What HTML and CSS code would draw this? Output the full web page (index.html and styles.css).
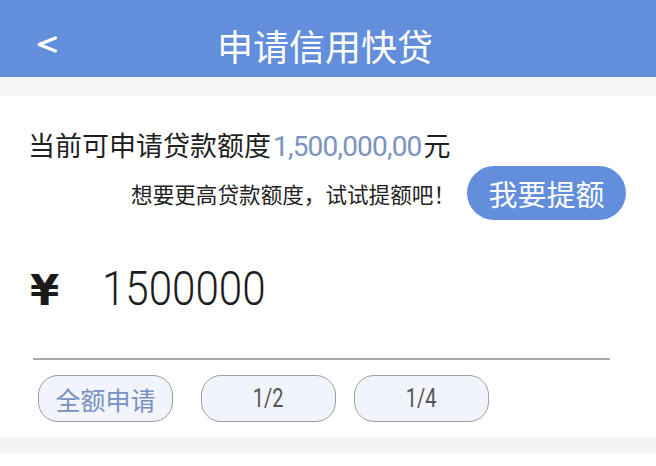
FILE: index.html
```html
<!DOCTYPE html>
<html lang="zh-CN">
<head>
<meta charset="utf-8">
<title>申请信用快贷</title>
<link rel="stylesheet" href="styles.css">
</head>
<body>
  <header class="topbar">
    <div class="topbar-left">
      <svg class="back-icon" width="24" height="20" viewBox="0 0 24 20" aria-hidden="true">
        <polyline points="19.5,3 3,9.5 19.5,16" fill="none" stroke="#ffffff" stroke-width="3.2" stroke-linecap="round" stroke-linejoin="round"/>
      </svg>
    </div>
    <h1 class="topbar-title">申请信用快贷</h1>
    <div class="topbar-right"></div>
  </header>

  <div class="spacer"></div>

  <main class="card">
    <p class="quota">当前可申请贷款额度<span class="quota-num">1,500,000,00</span>元</p>

    <div class="raise-row">
      <span class="raise-tip">想要更高贷款额度，试试提额吧！</span>
      <button class="raise-btn" type="button">我要提额</button>
    </div>

    <div class="amount-row">
      <span class="currency">¥</span>
      <span class="amount"><span class="amount-digits">1500000</span></span>
    </div>

    <div class="divider"></div>

    <div class="chips">
      <button class="chip chip-active" type="button">全额申请</button>
      <button class="chip chip-half" type="button"><span class="chip-num">1/2</span></button>
      <button class="chip" type="button"><span class="chip-num">1/4</span></button>
    </div>
  </main>

  <div class="band"></div>
</body>
</html>
```

FILE: styles.css
```css
* {
  box-sizing: border-box;
}

html, body {
  margin: 0;
  padding: 0;
  background: #ffffff;
}

body {
  font-family: "Noto Sans CJK SC", "Noto Sans", sans-serif;
  color: #222222;
}

/* blue title bar */
.topbar {
  height: 77px;
  padding-top: 12px;
  background: #628edc;
  display: grid;
  grid-template-columns: 1fr auto 1fr;
  align-items: center;
}

.topbar-left {
  padding-left: 36px;
  display: flex;
  align-items: center;
}

.back-icon {
  display: block;
}

.topbar-title {
  margin: 0 6px 0 0;
  font-size: 36px;
  font-weight: 400;
  line-height: 40px;
  color: #ffffff;
}

.spacer {
  height: 19px;
  background: #f4f5f5;
}

/* main content */
.card {
  background: #ffffff;
  padding: 31px 0 16px 0;
}

.quota {
  margin: 0;
  padding-left: 28px;
  font-size: 27px;
  line-height: 36px;
  color: #1f1f1f;
}

.quota-num {
  font-family: Roboto, "Noto Sans", sans-serif;
  font-size: 28px;
  letter-spacing: -0.8px;
  color: #7b93c0;
  margin: 0 2px 0 2px;
}

.raise-row {
  margin-top: 1px;
  height: 54px;
  display: flex;
  justify-content: flex-end;
  align-items: center;
  padding-right: 30px;
  gap: 12px;
}

.raise-tip {
  font-size: 21.6px;
  color: #222222;
}

.raise-btn {
  width: 159px;
  height: 54px;
  border: none;
  border-radius: 27px;
  background: #628edc;
  color: #ffffff;
  font-family: "Noto Sans CJK SC", sans-serif;
  font-size: 29px;
  padding: 0;
  line-height: 54px;
}

.amount-row {
  margin-top: 38px;
  height: 60px;
  display: flex;
  align-items: center;
  padding-left: 30px;
}

.currency {
  font-family: "DejaVu Sans", sans-serif;
  font-weight: 700;
  font-size: 42px;
  width: 72px;
  color: #1a1a1a;
  position: relative;
  top: 2px;
}

.amount {
  display: inline-block;
}

.amount-digits {
  display: inline-block;
  font-family: Roboto, sans-serif;
  font-weight: 300;
  font-size: 49px;
  color: #1e1e1e;
  transform: scaleX(0.86);
  transform-origin: left center;
}

.divider {
  margin: 40px 46px 0 33px;
  height: 2px;
  background: #a9a9a9;
}

.chips {
  margin-top: 15px;
  padding-left: 38px;
  display: flex;
  align-items: center;
}

.chip {
  width: 135px;
  height: 47px;
  border: 1.5px solid #9d9d9d;
  border-radius: 20px;
  background: #f1f4fb;
  color: #555555;
  font-family: "Noto Sans CJK SC", sans-serif;
  font-size: 25px;
  padding: 0;
  margin-right: 18px;
  display: flex;
  align-items: center;
  justify-content: center;
}

.chip-active {
  color: #7690bf;
  margin-right: 28px;
}

.chip-num {
  font-family: Roboto, sans-serif;
  font-size: 25px;
  display: inline-block;
  transform: scaleX(0.8);
}

.band {
  height: 16px;
  background: #f4f4f4;
}
```
